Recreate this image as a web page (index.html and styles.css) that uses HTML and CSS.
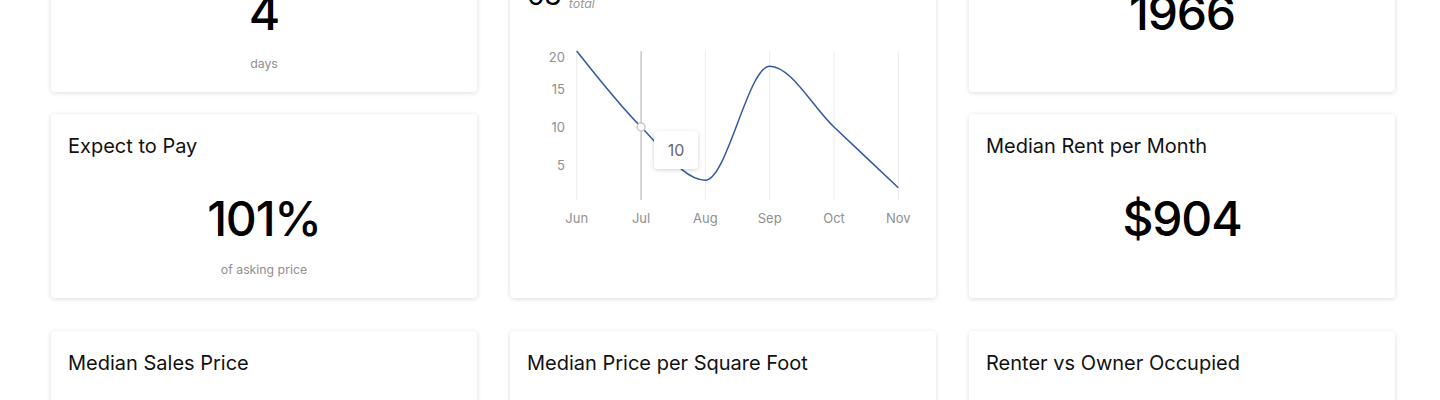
FILE: index.html
```html
<!DOCTYPE html>
<html lang="en">
<head>
<meta charset="utf-8">
<title>Market Stats</title>
<link rel="stylesheet" href="styles.css">
</head>
<body>
<div class="page">
  <section class="grid-top">
    <div class="col">
      <div class="card stat">
        <div class="card-title">Days on Market</div>
        <div class="value">4</div>
        <div class="sub">days</div>
      </div>
      <div class="card stat">
        <div class="card-title">Expect to Pay</div>
        <div class="value">101%</div>
        <div class="sub">of asking price</div>
      </div>
    </div>
    <div class="card chart-card">
      <div class="card-title">Homes Sold</div>
      <div class="total-row"><span class="total-num">63</span><span class="total-label">total</span></div>
      <svg class="chart" width="426" height="220" viewBox="510 30 426 220">
        <g class="grid">
          <line x1="576.7" y1="51" x2="576.7" y2="200"/>
          <line class="hover" x1="641.1" y1="51" x2="641.1" y2="200"/>
          <line x1="705.4" y1="51" x2="705.4" y2="200"/>
          <line x1="769.7" y1="51" x2="769.7" y2="200"/>
          <line x1="834.0" y1="51" x2="834.0" y2="200"/>
          <line x1="898.3" y1="51" x2="898.3" y2="200"/>
        </g>
        <g class="ylabels">
          <text x="565" y="61.5">20</text>
          <text x="565" y="93.5">15</text>
          <text x="565" y="131.5">10</text>
          <text x="565" y="169.5">5</text>
        </g>
        <g class="xlabels">
          <text x="576.7" y="222.5">Jun</text>
          <text x="641.1" y="222.5">Jul</text>
          <text x="705.4" y="222.5">Aug</text>
          <text x="769.7" y="222.5">Sep</text>
          <text x="834.0" y="222.5">Oct</text>
          <text x="898.3" y="222.5">Nov</text>
        </g>
        <path class="line" d="M576.7,51 C598.14,78.23 619.66,105.47 641.1,127 C662.54,148.53 683.96,180.2 705.4,180.2 C726.84,180.2 748.26,66.2 769.7,66.2 C791.14,66.2 812.56,106.73 834.0,127 C855.44,147.27 876.86,167.53 898.3,187.8"/>
        <circle class="dot" cx="641.1" cy="127" r="4"/>
      </svg>
      <div class="tooltip">10</div>
    </div>
    <div class="col">
      <div class="card stat">
        <div class="card-title">Median Year Built</div>
        <div class="value">1966</div>
        <div class="sub"></div>
      </div>
      <div class="card stat">
        <div class="card-title">Median Rent per Month</div>
        <div class="value">$904</div>
        <div class="sub"></div>
      </div>
    </div>
  </section>
  <section class="grid-bottom">
    <div class="card stat">
      <div class="card-title">Median Sales Price</div>
    </div>
    <div class="card stat">
      <div class="card-title">Median Price per Square Foot</div>
    </div>
    <div class="card stat">
      <div class="card-title">Renter vs Owner Occupied</div>
    </div>
  </section>
</div>
</body>
</html>
```

FILE: styles.css
```css
* { box-sizing: border-box; }
html, body {
  margin: 0;
  padding: 0;
  background: #fff;
  overflow: hidden;
}
body {
  font-family: Inter, "Liberation Sans", sans-serif;
  color: #111;
}
.page {
  margin-top: -92px;
  padding-left: 51px;
}
.grid-top {
  display: grid;
  grid-template-columns: 426px 426px 426px;
  column-gap: 33px;
  align-items: start;
}
.col {
  display: flex;
  flex-direction: column;
  gap: 22px;
}
.grid-bottom {
  display: grid;
  grid-template-columns: 426px 426px 426px;
  column-gap: 33px;
  margin-top: 33px;
}
.card {
  position: relative;
  background: #fff;
  border-radius: 4px;
  box-shadow: 0 1px 5px rgba(0, 0, 0, 0.14);
  padding: 20px 17px 0;
}
.stat {
  height: 184px;
}
.card-title {
  font-size: 20px;
  line-height: 24px;
  letter-spacing: 0;
  color: #111;
}
.value {
  margin-top: 33px;
  font-size: 48px;
  font-weight: 500;
  line-height: 56px;
  letter-spacing: -1.2px;
  text-align: center;
  color: #000;
}
.sub {
  margin-top: 15px;
  font-size: 12.3px;
  line-height: 16px;
  text-align: center;
  color: #8f8f8f;
}
.chart-card {
  height: 390px;
}
.total-row {
  margin-top: 23px;
  height: 36px;
  display: flex;
  align-items: flex-end;
  gap: 7px;
}
.total-num {
  font-size: 28px;
  line-height: 32px;
  color: #000;
}
.total-label {
  font-size: 12.5px;
  line-height: 15px;
  font-style: italic;
  color: #999;
}
.chart {
  display: block;
  margin: 19px -17px 0;
}
.grid line {
  stroke: #ececec;
  stroke-width: 1;
}
.grid line.hover {
  stroke: #c8c8c8;
  stroke-width: 1.5;
}
.ylabels text {
  font-family: Inter, "Liberation Sans", sans-serif;
  font-size: 13px;
  fill: #8f8f8f;
  text-anchor: end;
}
.xlabels text {
  font-family: Inter, "Liberation Sans", sans-serif;
  font-size: 13px;
  fill: #8f8f8f;
  text-anchor: middle;
}
.line {
  fill: none;
  stroke: #34589f;
  stroke-width: 1.5;
}
.dot {
  fill: #fff;
  stroke: #c8c8c8;
  stroke-width: 1.5;
}
.tooltip {
  position: absolute;
  left: 144px;
  top: 223px;
  width: 44px;
  height: 38px;
  background: #fff;
  border-radius: 3px;
  box-shadow: 0 1px 4px rgba(0, 0, 0, 0.18);
  display: flex;
  align-items: center;
  justify-content: center;
  font-size: 16px;
  color: #666;
}
```
